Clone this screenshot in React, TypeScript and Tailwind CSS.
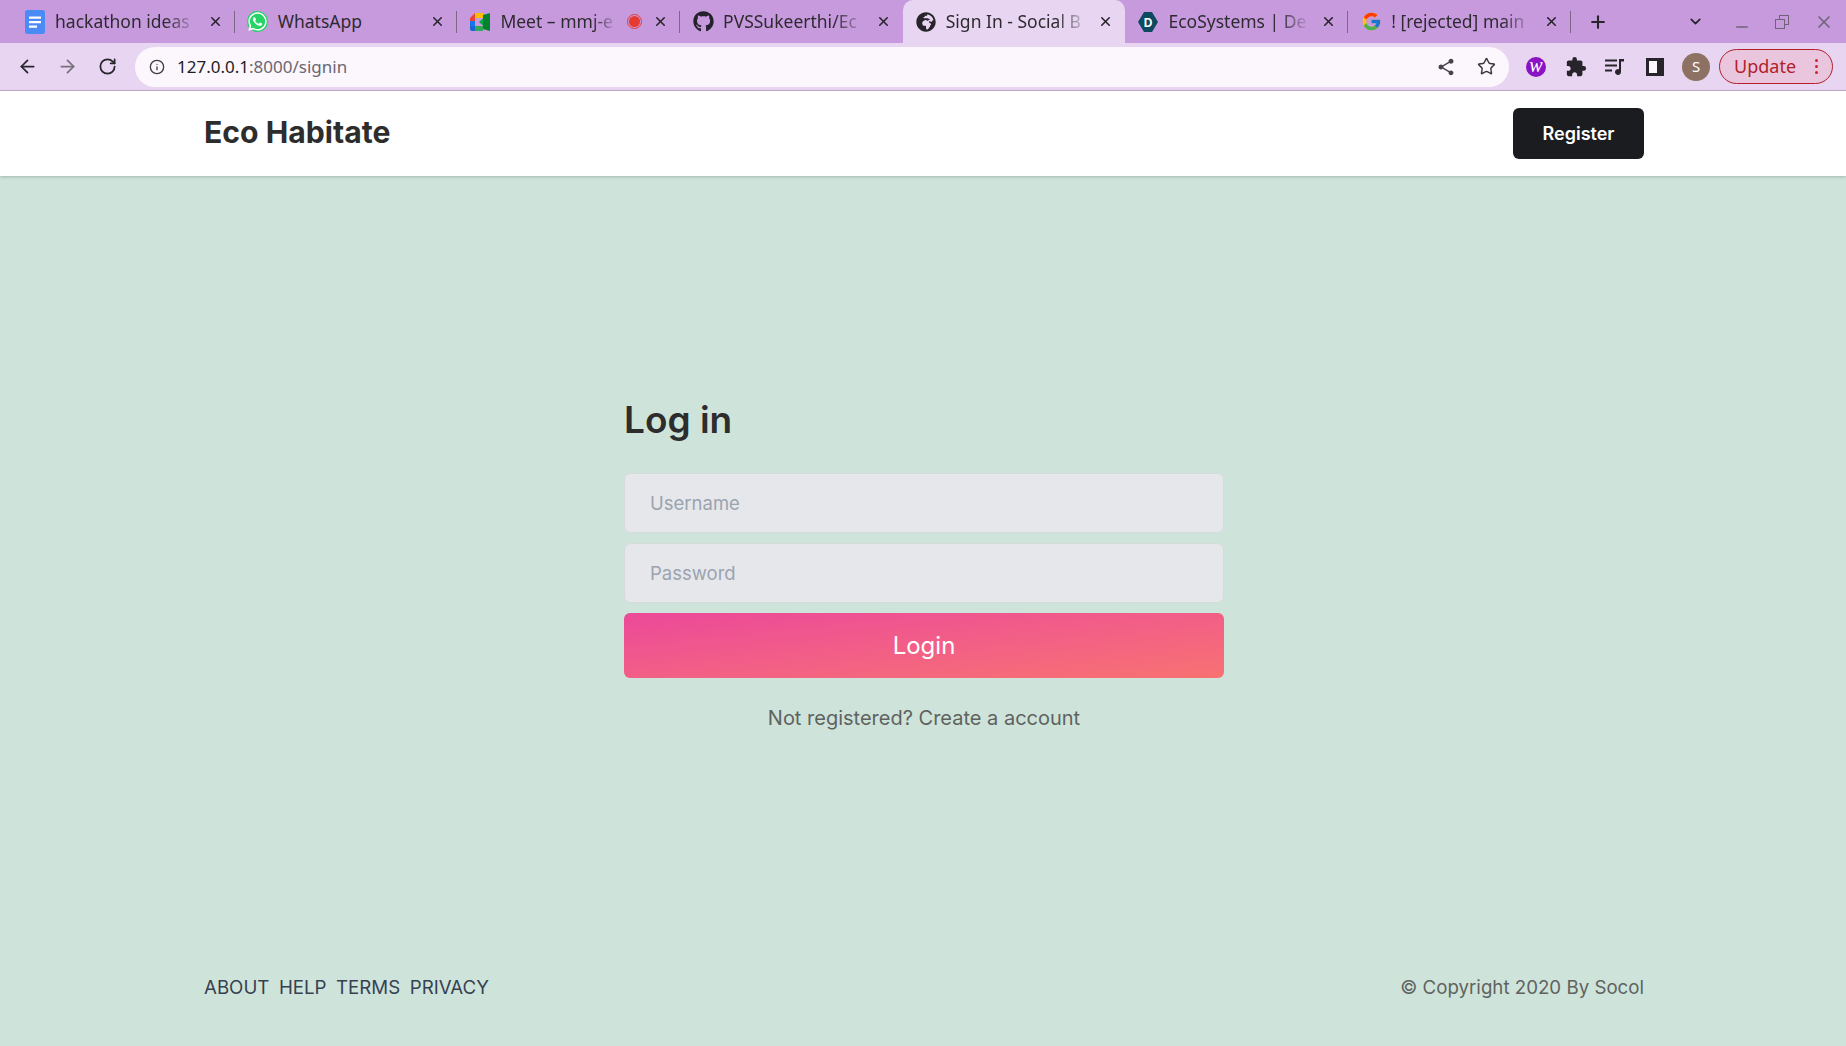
import type { ReactNode } from 'react';
import { ArrowLeft, ArrowRight, RotateCw, Info, Star, X, Plus, ChevronDown, Minus } from 'lucide-react';
import { FaGithub, FaWhatsapp, FaGlobeAfrica } from 'react-icons/fa';
import { FcGoogle } from 'react-icons/fc';
import { MdShare, MdExtension } from 'react-icons/md';

function DocsIcon() {
    return (
        <svg width="20" height="24" viewBox="0 0 20 24">
            <rect x="0" y="0" width="20" height="24" rx="2.5" fill="#4a8bf5" />
            <path d="M4 6.5h12v2.2H4zM4 11h12v2.2H4zM4 15.500h8v2.200H4z" fill="#fff" />
        </svg>
    );
}

function WhatsappIcon() {
    return (
        <div className="w-[21px] h-[21px] rounded-full bg-[#25d366] flex items-center justify-center">
            <FaWhatsapp size={21} className="text-white" />
        </div>
    );
}

function MeetIcon() {
    return (
        <svg width="20" height="18" viewBox="0 0 20 18">
            <path d="M0 5 5 0h8v5H5v3H0z" fill="#ea4335" />
            <path d="M5 0h8v5H5z" fill="#fbbc04" />
            <path d="M0 8h5v5H0z" fill="#1a73e8" />
            <path d="M0 13h5v5H2a2 2 0 0 1-2-2z" fill="#1967d2" />
            <path d="M5 13h8v5H5z" fill="#34a853" />
            <path d="M13 2v14l7 2V0z" fill="#00832d" />
            <path d="m9 9 4-3.500v7z" fill="#00ac47" />
        </svg>
    );
}

function RecordingDot() {
    return (
        <div className="w-[15px] h-[15px] rounded-full border border-[#e53a2f] flex items-center justify-center shrink-0">
            <div className="w-[11px] h-[11px] rounded-full bg-[#e53a2f]" />
        </div>
    );
}

function DevIcon() {
    return (
        <svg width="20" height="22" viewBox="0 0 20 22">
            <path d="M6 1h8l6 10-6 10H6L0 11z" fill="#0d4a5f" />
            <text x="10" y="15.500" textAnchor="middle" fontSize="12" fontWeight="700" fill="#fff" fontFamily="Inter, sans-serif">D</text>
        </svg>
    );
}

function QueueIcon() {
    return (
        <svg width="20" height="20" viewBox="0 0 20 20" fill="#27252b">
            <path d="M0 2.500h12v2H0zM0 7.500h12v2H0zM0 12.500h7v2H0z" />
            <path d="M14 2h5v2.500h-3V15a3 3 0 1 1-2-2.800z" />
        </svg>
    );
}

function SidePanelIcon() {
    return (
        <div className="w-[18px] h-[18px] border-[3px] border-r-[7px] border-[#27252b] bg-[#fbf7fd]" />
    );
}

function WavoIcon() {
    return (
        <div className="w-[20px] h-[20px] rounded-full bg-[#8a12c4] flex items-center justify-center text-white italic text-[20px] leading-none pb-[3px] font-['Liberation_Serif',serif]">
            w
        </div>
    );
}

type TabItem = { title: string; icon: ReactNode; dot?: boolean; fade?: boolean };

const tabs: TabItem[] = [
    { title: 'hackathon ideas', icon: <DocsIcon />, fade: true },
    { title: 'WhatsApp', icon: <WhatsappIcon /> },
    { title: 'Meet – mmj-e', icon: <MeetIcon />, dot: true, fade: true },
    { title: 'PVSSukeerthi/Ec', icon: <FaGithub size={21} className="text-[#24212a]" />, fade: true },
    { title: 'Sign In - Social B', icon: <FaGlobeAfrica size={20} className="text-[#27252b]" />, fade: true },
    { title: 'EcoSystems | De', icon: <DevIcon />, fade: true },
    { title: '! [rejected] main', icon: <FcGoogle size={21} />, fade: true },
];

const activeTab = 4;

function BrowserTab({ tab, active, showSeparator }: { tab: TabItem; active: boolean; showSeparator: boolean }) {
    return (
        <div className={`relative w-[222.700px] shrink-0 flex items-center gap-[9px] pl-[12px] pr-[12px] ${active ? 'self-stretch bg-[#e8d5f1] rounded-t-[10px]' : ''}`}>
            <div className="w-[22px] flex items-center justify-center shrink-0">{tab.icon}</div>
            <span className={`flex-1 min-w-0 overflow-hidden whitespace-nowrap text-[17.500px] text-[#2d2a30] ${tab.fade ? '[mask-image:linear-gradient(to_right,black_78%,transparent_100%)]' : ''}`}>
                {tab.title}
            </span>
            {tab.dot && <RecordingDot />}
            <X size={15} strokeWidth={2.500} className="text-[#27252b] shrink-0 ml-[2px]" />
            {showSeparator && <div className="absolute right-0 top-[11px] h-[22px] w-px bg-[#7d6687]" />}
        </div>
    );
}

function BrowserChrome() {
    return (
        <div className="shrink-0 font-['Noto_Sans',sans-serif]">
            <div className="h-[43px] bg-[#c79ade] flex items-stretch pl-[12px]">
                {tabs.map((tab, i) => (
                    <BrowserTab key={tab.title} tab={tab} active={i === activeTab} showSeparator={i !== activeTab && i !== activeTab - 1} />
                ))}
                <div className="flex-1 flex items-center text-[#27252b]">
                    <Plus size={20} strokeWidth={2.500} className="ml-[17px]" />
                    <ChevronDown size={17} strokeWidth={2.500} className="ml-[79px]" />
                    <Minus size={18} className="ml-[29px] mt-[10px] text-[#6f6377]" />
                    <div className="ml-[24px] relative w-[14px] h-[14px]">
                        <div className="absolute right-0 top-0 w-[10px] h-[10px] border-[1.500px] border-[#6f6377]" />
                        <div className="absolute left-0 bottom-0 w-[10px] h-[10px] border-[1.500px] border-[#6f6377] bg-[#c79ade]" />
                    </div>
                    <X size={20} className="ml-[25px] text-[#6f6377]" />
                </div>
            </div>
            <div className="h-[48px] bg-[#e8d5f1] border-b border-[#c2aec9] flex items-center pl-[17px]">
                <ArrowLeft size={21} className="text-[#27252b]" />
                <ArrowRight size={21} className="ml-[19px] text-[#77707d]" />
                <RotateCw size={19} strokeWidth={2.200} className="ml-[20px] text-[#27252b]" />
                <div className="ml-[18px] h-[40px] w-[1374px] rounded-full bg-[#fbf7fd] flex items-center pl-[14px] pr-[13px]">
                    <Info size={16} className="text-[#3f3b44]" />
                    <span className="ml-[12px] text-[17px] text-[#1f1d22]">127.0.0.1<span className="text-[#6b6670]">:8000/signin</span></span>
                    <MdShare size={20} className="ml-auto mr-[1px] text-[#47434c]" />
                    <Star size={19} strokeWidth={1.800} className="ml-[20px] text-[#3a363f]" />
                </div>
                <div className="ml-[17px]"><WavoIcon /></div>
                <MdExtension size={22} className="ml-[19px] text-[#27252b]" />
                <div className="ml-[18px]"><QueueIcon /></div>
                <div className="ml-[21px]"><SidePanelIcon /></div>
                <div className="ml-[18px] w-[28px] h-[28px] rounded-full bg-[#8d7163] text-white text-[15px] flex items-center justify-center">S</div>
                <div className="ml-[9px] h-[35px] w-[114px] rounded-full border border-[#b3202a] bg-[#e9c6de] flex items-center pl-[14px] text-[18px] text-[#b3202a]">
                    Update
                    <div className="ml-auto mr-[14px] flex flex-col gap-[3px]">
                        <div className="w-[3px] h-[3px] rounded-full bg-[#c62828]" />
                        <div className="w-[3px] h-[3px] rounded-full bg-[#c62828]" />
                        <div className="w-[3px] h-[3px] rounded-full bg-[#c62828]" />
                    </div>
                </div>
            </div>
        </div>
    );
}

export default function App() {
    return (
        <div className="h-screen flex flex-col overflow-hidden bg-[#cee4da] font-['Inter',sans-serif]">
            <BrowserChrome />

            <header className="h-[85px] shrink-0 bg-white shadow-[0_1px_3px_rgba(0,0,0,0.2)] relative pl-[204px] pr-[202px] flex items-center justify-between">
                <h1 className="text-[30.200px] font-bold text-[#2d2d2d] pb-[2px]">Eco Habitate</h1>
                <button className="w-[131px] h-[51px] rounded-md bg-[#1b1c20] text-white text-[18px] font-semibold">Register</button>
            </header>

            <main className="flex-1 flex flex-col items-center">
                <div className="w-[600px] mt-[219px] translate-x-[1px]">
                    <h2 className="text-[37px] leading-[50px] font-semibold text-[#2d2d2d]">Log in</h2>
                    <div className="mt-[28px] flex flex-col gap-[10px]">
                        <input type="text" placeholder="Username" className="w-full h-[60px] px-[25px] rounded-md bg-[#e5e7eb] border border-[#d5dadb] text-[18.500px] placeholder:text-[#9ca3af] outline-none" />
                        <input type="password" placeholder="Password" className="w-full h-[60px] px-[25px] rounded-md bg-[#e5e7eb] border border-[#d5dadb] text-[18.500px] placeholder:text-[#9ca3af] outline-none" />
                        <button className="w-full h-[65px] rounded-md bg-linear-to-br from-[#ec4899] to-[#f87171] text-white text-[24px]">Login</button>
                    </div>
                    <p className="mt-[25px] text-center text-[20px] text-[#5f625f]">Not registered? Create a account</p>
                </div>

                <footer className="w-full pl-[204px] pr-[202px] mt-auto mb-[44px] flex items-center justify-between text-[18.700px]">
                    <nav className="flex gap-[9.500px] text-[#374151]">
                        <a>ABOUT</a>
                        <a>HELP</a>
                        <a>TERMS</a>
                        <a>PRIVACY</a>
                    </nav>
                    <p className="text-[#5f625f]">© Copyright 2020 By Socol</p>
                </footer>
            </main>
        </div>
    );
}
